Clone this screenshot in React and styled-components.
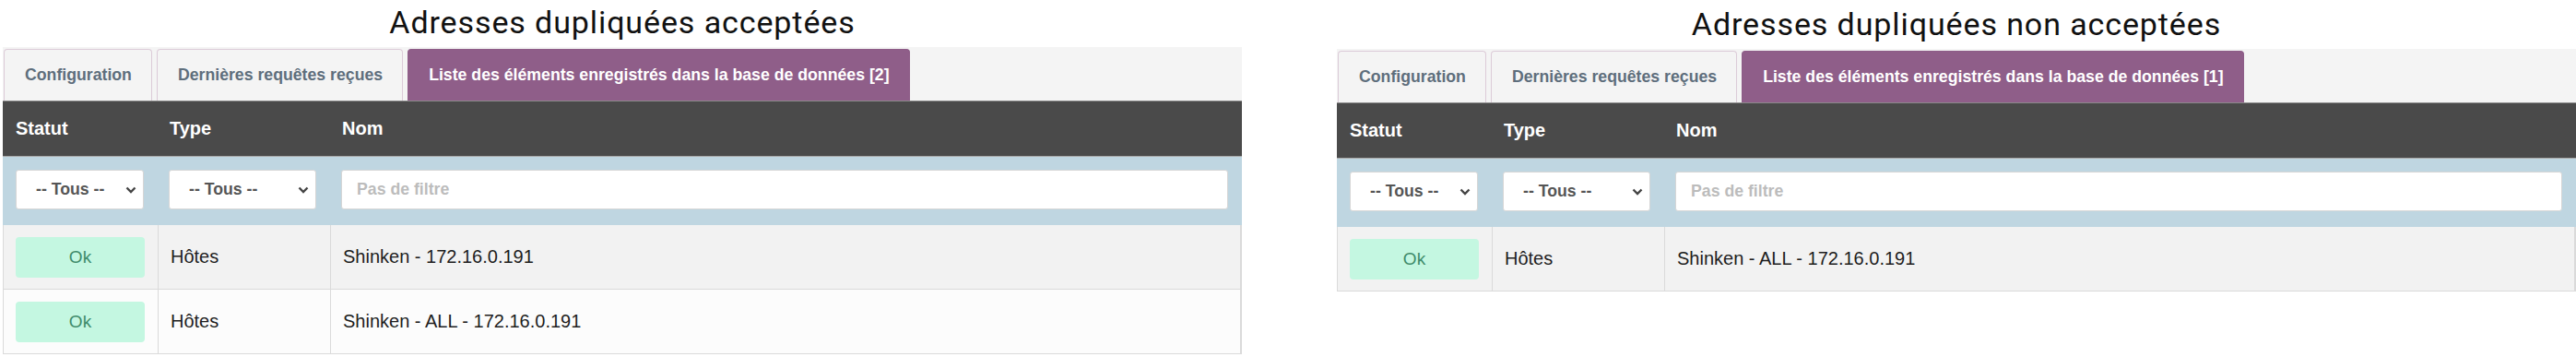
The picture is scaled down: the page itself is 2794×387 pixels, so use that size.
import React from 'react';
import styled, { createGlobalStyle } from 'styled-components';

const GlobalStyle = createGlobalStyle`
  body {
    margin: 0;
    background: #fff;
  }
`

const Page = styled.div`
  display: flex;
  gap: 103px;
  padding-left: 3px;
`

const Column = styled.div`
  width: 1344px;
  display: flex;
  flex-direction: column;
  padding-top: ${p => p.$shift || 0}px;
`

const Caption = styled.div`
  font-family: Roboto, "Noto Sans", sans-serif;
  font-size: 34px;
  letter-spacing: 0.9px;
  line-height: 49px;
  height: 51px;
  color: #111;
  text-align: center;
`

const Panel = styled.div`
  font-family: "Liberation Sans", Arial, sans-serif;
  display: flex;
  flex-direction: column;
`

const TabBar = styled.div`
  display: flex;
  gap: 5px;
  height: 58px;
  box-sizing: border-box;
  padding: 2px 1px 0;
  background: #f4f4f4;
`

const Tab = styled.div`
  display: flex;
  align-items: center;
  height: 56px;
  box-sizing: border-box;
  padding: 0 21px 0 22px;
  border: 1px solid ${p => p.$active ? '#8e5d88' : '#dccbd8'};
  border-bottom: none;
  border-radius: 4px 4px 0 0;
  background: ${p => p.$active ? '#8f5e89' : '#f4f4f4'};
  color: ${p => p.$active ? '#fff' : '#5e6e7c'};
  font-size: 17.7px;
  font-weight: bold;
  white-space: nowrap;
`

const cols = '168px 187px 1fr';

const HeadRow = styled.div`
  display: grid;
  grid-template-columns: ${cols};
  align-items: center;
  height: 61px;
  box-sizing: border-box;
  background: #4a4a4a;
  border-top: 1px solid #8a8a8a;
  border-bottom: 1px solid #a9a9a9;
  color: #fff;
  font-size: 20px;
  font-weight: bold;
`

const HeadCell = styled.div`
  padding-left: ${p => p.$first ? 14 : 13}px;
`

const FilterRow = styled.div`
  display: grid;
  grid-template-columns: ${cols};
  padding: 14px 0 17px;
  background: #bfd6e1;
`

const FilterCell = styled.div`
  padding: 0 15px 0 ${p => p.$first ? 14 : 12}px;
`

const SelectBox = styled.div`
  display: flex;
  align-items: center;
  justify-content: space-between;
  height: 43px;
  box-sizing: border-box;
  padding: 0 7px 0 21px;
  background: #fff;
  border: 1px solid #d6d6d6;
  border-radius: 3px;
  color: #555;
  font-size: 17.7px;
  font-weight: bold;
`

const TextFilter = styled.input`
  display: block;
  width: 100%;
  height: 43px;
  box-sizing: border-box;
  padding: 0 16px;
  background: #fff;
  border: 1px solid #d6d6d6;
  border-radius: 3px;
  font-family: "Liberation Sans", Arial, sans-serif;
  font-size: 17.7px;
  font-weight: bold;
  color: #555;
  outline: none;

  &::placeholder {
    color: #bcbcbc;
  }
`

const Row = styled.div`
  display: grid;
  grid-template-columns: ${cols};
  height: 70px;
  box-sizing: border-box;
  background: ${p => p.$odd ? '#f2f2f2' : '#fcfcfc'};
  border: 1px solid #dadada;
  border-top: none;
  border-right-width: 2px;
  color: #1e1e1e;
  font-size: 20px;
`

const Cell = styled.div`
  display: flex;
  align-items: center;
  padding-left: 13px;
  border-right: ${p => p.$last ? 'none' : '1px solid #dadada'};
`

const OkBadge = styled.div`
  display: flex;
  align-items: center;
  justify-content: center;
  width: 140px;
  height: 44px;
  border-radius: 4px;
  background: #c4f7e1;
  color: #3f8c6b;
  font-size: 19px;
`

const Chevron = () => (
  <svg width="12" height="8" viewBox="0 0 12 8">
    <path d="M1.5 1.5 L6 6 L10.5 1.5" fill="none" stroke="#444" strokeWidth="2.4" />
  </svg>
)

function Select() {
  return (
    <SelectBox>
      <span>-- Tous --</span>
      <Chevron />
    </SelectBox>
  )
}

function ListPanel({ count, rows }) {
  return (
    <Panel>
      <TabBar>
        <Tab>Configuration</Tab>
        <Tab>Dernières requêtes reçues</Tab>
        <Tab $active>Liste des éléments enregistrés dans la base de données [{count}]</Tab>
      </TabBar>
      <HeadRow>
        <HeadCell $first>Statut</HeadCell>
        <HeadCell>Type</HeadCell>
        <HeadCell>Nom</HeadCell>
      </HeadRow>
      <FilterRow>
        <FilterCell $first><Select /></FilterCell>
        <FilterCell><Select /></FilterCell>
        <FilterCell><TextFilter placeholder="Pas de filtre" /></FilterCell>
      </FilterRow>
      {rows.map((name, i) => (
        <Row key={i} $odd={i % 2 === 0}>
          <Cell><OkBadge>Ok</OkBadge></Cell>
          <Cell>Hôtes</Cell>
          <Cell $last>{name}</Cell>
        </Row>
      ))}
    </Panel>
  )
}

function App() {
  return (
    <>
      <GlobalStyle />
      <Page>
        <Column>
          <Caption>Adresses dupliquées acceptées</Caption>
          <ListPanel count={2} rows={['Shinken - 172.16.0.191', 'Shinken - ALL - 172.16.0.191']} />
        </Column>
        <Column $shift={2}>
          <Caption>Adresses dupliquées non acceptées</Caption>
          <ListPanel count={1} rows={['Shinken - ALL - 172.16.0.191']} />
        </Column>
      </Page>
    </>
  )
}

export default App;
